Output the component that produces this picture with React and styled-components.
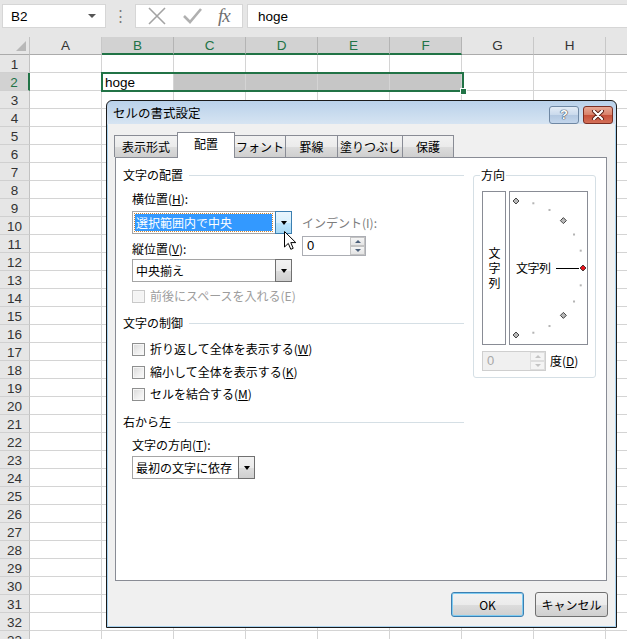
import React from 'react';
import styled, { createGlobalStyle, css } from 'styled-components';

const GlobalStyle = createGlobalStyle`
  html, body { margin: 0; padding: 0; }
  body { background: #fff; font-family: "Liberation Sans", Arial, sans-serif; }
  * { box-sizing: border-box; }
`;

const COLUMNS = ['A', 'B', 'C', 'D', 'E', 'F', 'G', 'H', 'I'];
const SELECTED_COLS = ['B', 'C', 'D', 'E', 'F'];
const ROW_COUNT = 33;
const GREEN = '#217346';
const JP = '"Noto Sans CJK JP", "Noto Sans", sans-serif';

const TABS = [
   { label: '表示形式', w: 64 },
   { label: '配置', w: 58, active: true },
   { label: 'フォント', w: 52 },
   { label: '罫線', w: 53 },
   { label: '塗りつぶし', w: 66 },
   { label: '保護', w: 52 },
];

// angles on the orientation dial, diamonds every 45 degrees
const DIAL_ANGLES = [90, 75, 60, 45, 30, 15, 0, -15, -30, -45, -60, -75, -90];

const Diamond = ({ x, y, fill }) => (
   <polygon points={`${x},${y - 3} ${x + 3},${y} ${x},${y + 3} ${x - 3},${y}`} fill={fill} stroke="#222" strokeWidth="0.8" />
);

const App = () => {
   const rows = Array.from({ length: ROW_COUNT }, (_, i) => i + 1);

   return (
      <>
         <GlobalStyle />
         <Screen>
            <FormulaBar>
               <NameBox>
                  B2
                  <NameCaret />
               </NameBox>
               <BarDots>⋮</BarDots>
               <FxBox>
                  <svg width="18" height="18" viewBox="0 0 18 18">
                     <path d="M1 1 L17 17 M17 1 L1 17" stroke="#a3a3a3" strokeWidth="1.6" fill="none" />
                  </svg>
                  <svg width="19" height="16" viewBox="0 0 19 16">
                     <path d="M1 8 L7 14 L18 1" stroke="#b0b0b0" strokeWidth="2.6" fill="none" />
                  </svg>
                  <FxLabel>fx</FxLabel>
               </FxBox>
               <FormulaInput>hoge</FormulaInput>
            </FormulaBar>

            <Sheet>
               <Corner><CornerMark /></Corner>
               {COLUMNS.map((c) => (
                  <ColHead key={c} $active={SELECTED_COLS.includes(c)}>{c === 'I' ? '' : c}</ColHead>
               ))}
               {rows.map((r) => (
                  <React.Fragment key={r}>
                     <RowHead $active={r === 2}>{r}</RowHead>
                     {COLUMNS.map((c) => (
                        <Cell key={c} $shade={r === 2 && c !== 'B' && SELECTED_COLS.includes(c)}>
                           {r === 2 && c === 'B' ? 'hoge' : ''}
                        </Cell>
                     ))}
                  </React.Fragment>
               ))}
               <SelectionFrame><FillHandle /></SelectionFrame>
            </Sheet>

            <Dialog>
               <TitleBar>
                  <TitleText>セルの書式設定</TitleText>
                  <TitleButtons>
                     <HelpButton>?</HelpButton>
                     <CloseButton>
                        <svg width="14" height="10" viewBox="0 0 14 10">
                           <path d="M3 1 L11 9 M11 1 L3 9" stroke="#5a1d14" strokeWidth="4" strokeLinecap="round" />
                           <path d="M3 1 L11 9 M11 1 L3 9" stroke="#fff" strokeWidth="2.2" strokeLinecap="round" />
                        </svg>
                     </CloseButton>
                  </TitleButtons>
               </TitleBar>

               <DialogBody>
                  <TabStrip>
                     {TABS.map((t) => (
                        <Tab key={t.label} $active={t.active} $w={t.w}>{t.label}</Tab>
                     ))}
                  </TabStrip>

                  <Panel>
                     <LeftColumn>
                        <GroupHeading $mt={9}>文字の配置</GroupHeading>
                        <FieldRow>
                           <FieldStack>
                              <FieldLabel>横位置(<u>H</u>):</FieldLabel>
                              <Select $mt={4}>
                                 <SelectValue $highlight>選択範囲内で中央</SelectValue>
                                 <SelectArrow $hot><ArrowGlyph /></SelectArrow>
                              </Select>
                              <FieldLabel $mt={7}>縦位置(<u>V</u>):</FieldLabel>
                              <Select $mt={2}>
                                 <SelectValue>中央揃え</SelectValue>
                                 <SelectArrow><ArrowGlyph /></SelectArrow>
                              </Select>
                           </FieldStack>
                           <IndentStack>
                              <FieldLabel $muted>インデント(I):</FieldLabel>
                              <Spinner $mt={5}>
                                 <SpinValue>0</SpinValue>
                                 <SpinButtons>
                                    <SpinButton><SpinGlyph $up /></SpinButton>
                                    <SpinButton><SpinGlyph /></SpinButton>
                                 </SpinButtons>
                              </Spinner>
                           </IndentStack>
                        </FieldRow>
                        <CheckRow $mt={6} $disabled>
                           <CheckBox $disabled />
                           <span>前後にスペースを入れる(E)</span>
                        </CheckRow>

                        <GroupHeading $mt={11}>文字の制御</GroupHeading>
                        <CheckRow $mt={10}>
                           <CheckBox />
                           <span>折り返して全体を表示する(<u>W</u>)</span>
                        </CheckRow>
                        <CheckRow $mt={7}>
                           <CheckBox />
                           <span>縮小して全体を表示する(<u>K</u>)</span>
                        </CheckRow>
                        <CheckRow $mt={6}>
                           <CheckBox />
                           <span>セルを結合する(<u>M</u>)</span>
                        </CheckRow>

                        <GroupHeading $mt={12}>右から左</GroupHeading>
                        <FieldLabel $mt={7} $indent>文字の方向(<u>T</u>):</FieldLabel>
                        <Select $mt={3} $w={123} $indent>
                           <SelectValue>最初の文字に依存</SelectValue>
                           <SelectArrow><ArrowGlyph /></SelectArrow>
                        </Select>
                     </LeftColumn>

                     <DirectionGroup>
                        <DirectionLegend>方向</DirectionLegend>
                        <DirectionRow>
                           <VerticalBox><VerticalText>文字列</VerticalText></VerticalBox>
                           <DialBox>
                              <DialDrawing width="77" height="152" viewBox="0 0 77 152">
                                 {DIAL_ANGLES.map((a) => {
                                    const rad = (a * Math.PI) / 180;
                                    const x = 6 + 67 * Math.cos(rad);
                                    const y = 76 - 67 * Math.sin(rad);
                                    if (a === 0) return <Diamond key={a} x={x} y={y} fill="#e8141c" />;
                                    if (a % 45 === 0) return <Diamond key={a} x={x} y={y} fill="#b8b8b8" />;
                                    return <rect key={a} x={x - 1} y={y - 1} width="2" height="2" fill="#b4b4b4" />;
                                 })}
                                 <line x1="46" y1="76.5" x2="69" y2="76.5" stroke="#000" strokeWidth="1" />
                              </DialDrawing>
                              <DialLabel>文字列</DialLabel>
                           </DialBox>
                        </DirectionRow>
                        <DegreeRow>
                           <Spinner $disabled>
                              <SpinValue $disabled>0</SpinValue>
                              <SpinButtons>
                                 <SpinButton $disabled><SpinGlyph $up $disabled /></SpinButton>
                                 <SpinButton $disabled><SpinGlyph $disabled /></SpinButton>
                              </SpinButtons>
                           </Spinner>
                           <DegreeLabel>度(<u>D</u>)</DegreeLabel>
                        </DegreeRow>
                     </DirectionGroup>

                     <Cursor width="13" height="20" viewBox="0 0 13 20">
                        <path d="M0.5 0.5 L0.5 16 L4.3 12.4 L6.8 18.3 L9.2 17.3 L6.8 11.6 L11.8 11.6 Z" fill="#fff" stroke="#000" strokeWidth="1" />
                     </Cursor>
                  </Panel>

                  <DialogFooter>
                     <DialogButton $default>OK</DialogButton>
                     <DialogButton>キャンセル</DialogButton>
                  </DialogFooter>
               </DialogBody>
            </Dialog>
         </Screen>
      </>
   );
};

/* ---------- sheet ---------- */

const Screen = styled.div`
   position: relative;
   width: 627px;
   height: 639px;
   overflow: hidden;
   background: #e6e6e6;
`;

const FormulaBar = styled.div`
   display: flex;
   align-items: flex-start;
   height: 37px;
   padding: 4px 0 0 2px;
   font-size: 13.5px;
   color: #000;
`;

const NameBox = styled.div`
   display: flex;
   align-items: center;
   justify-content: space-between;
   width: 104px;
   height: 24px;
   padding: 0 9px 0 8px;
   background: #fff;
   border: 1px solid #d6d6d6;
`;

const NameCaret = styled.span`
   width: 0;
   height: 0;
   border-left: 4px solid transparent;
   border-right: 4px solid transparent;
   border-top: 4px solid #555;
`;

const BarDots = styled.div`
   width: 29px;
   height: 24px;
   display: flex;
   align-items: center;
   justify-content: center;
   color: #7a7a7a;
   font-size: 15px;
`;

const FxBox = styled.div`
   display: flex;
   align-items: center;
   justify-content: space-around;
   width: 108px;
   height: 24px;
   padding: 0 4px;
   background: #fff;
   border: 1px solid #d6d6d6;
`;

const FxLabel = styled.span`
   font-family: "Liberation Serif", "Times New Roman", serif;
   font-style: italic;
   font-size: 19px;
   color: #707070;
   letter-spacing: -1px;
`;

const FormulaInput = styled.div`
   flex: 1;
   display: flex;
   align-items: center;
   height: 24px;
   margin-left: 4px;
   padding-left: 10px;
   background: #fff;
   border: 1px solid #d6d6d6;
   border-right: none;
`;

const Sheet = styled.div`
   position: relative;
   display: grid;
   grid-template-columns: 30px repeat(9, 72px);
   grid-auto-rows: 18px;
   background: #fff;
   font-size: 13.5px;
`;

const Corner = styled.div`
   display: flex;
   align-items: flex-end;
   justify-content: flex-end;
   padding: 0 3px 3px 0;
   background: #e6e6e6;
   border-right: 1px solid #c2c2c2;
   border-bottom: 1px solid #ababab;
`;

const CornerMark = styled.span`
   width: 0;
   height: 0;
   border-left: 10px solid transparent;
   border-bottom: 10px solid #b8b8b8;
`;

const ColHead = styled.div`
   display: flex;
   align-items: center;
   justify-content: center;
   background: #e6e6e6;
   color: #333;
   border-right: 1px solid #c8c8c8;
   border-bottom: 1px solid #ababab;
   ${(p) => p.$active && css`
      background: #d2d2d2;
      color: ${GREEN};
      border-right-color: #b4b4b4;
      border-bottom: 2px solid ${GREEN};
   `}
`;

const RowHead = styled.div`
   display: flex;
   align-items: center;
   justify-content: center;
   padding-top: 1px;
   background: #e6e6e6;
   color: #333;
   border-right: 1px solid #c2c2c2;
   border-bottom: 1px solid #d0d0d0;
   ${(p) => p.$active && css`
      background: #d2d2d2;
      color: ${GREEN};
      border-right: 2px solid ${GREEN};
   `}
`;

const Cell = styled.div`
   display: flex;
   align-items: flex-end;
   padding: 0 0 0 3px;
   line-height: 14px;
   background: ${(p) => (p.$shade ? '#c6c6c6' : '#fff')};
   border-right: 1px solid #d4d4d4;
   border-bottom: 1px solid #d4d4d4;
`;

const SelectionFrame = styled.div`
   position: absolute;
   left: 101px;
   top: 35px;
   width: 363px;
   height: 20px;
   border: 2px solid ${GREEN};
   pointer-events: none;
`;

const FillHandle = styled.span`
   position: absolute;
   right: -5px;
   bottom: -5px;
   width: 7px;
   height: 7px;
   background: ${GREEN};
   border: 1px solid #fff;
`;

/* ---------- dialog ---------- */

const Dialog = styled.div`
   position: absolute;
   left: 106px;
   top: 100px;
   width: 511px;
   display: flex;
   flex-direction: column;
   padding: 0 1px 1px 1px;
   border: 1px solid #1a1a1a;
   border-radius: 6px 6px 0 0;
   background: linear-gradient(180deg, #b9d1ea 0px, #d6e4f2 23px, #a9d2ee 24px, #a9d2ee 100%);
   font-family: ${JP};
   font-size: 12px;
   line-height: 16px;
   color: #000;
`;

const TitleBar = styled.div`
   display: flex;
   align-items: center;
   height: 23px;
   padding: 1px 2px 0 5px;
`;

const TitleText = styled.span`
   font-size: 12.5px;
`;

const TitleButtons = styled.div`
   display: flex;
   gap: 4px;
   margin-left: auto;
   margin-top: 3px;
`;

const titleButton = css`
   display: flex;
   align-items: center;
   justify-content: center;
   width: 30px;
   height: 18px;
   border-radius: 3px;
`;

const HelpButton = styled.div`
   ${titleButton}
   border: 1px solid #6f88a4;
   background: linear-gradient(180deg, #e3ecf6 0%, #c9d9ec 50%, #b3c8e1 51%, #c3d6ec 100%);
   color: #fff;
   font-family: "Liberation Sans", sans-serif;
   font-weight: bold;
   font-size: 13px;
   text-shadow: 0 0 1px #31445a, 0 0 1px #31445a, 0 0 1px #31445a;
`;

const CloseButton = styled.div`
   ${titleButton}
   border: 1px solid #7b2e22;
   background: linear-gradient(180deg, #e8a895 0%, #d88069 50%, #c7503a 51%, #d37058 100%);
`;

const DialogBody = styled.div`
   display: flex;
   flex-direction: column;
   padding: 8px 8px 9px 7px;
   background: #f0f0f0;
`;

const TabStrip = styled.div`
   position: relative;
   z-index: 1;
   display: flex;
   align-items: flex-end;
   height: 26px;
   margin: 0 0 -1px -1px;
`;

const Tab = styled.div`
   display: flex;
   align-items: center;
   justify-content: center;
   width: ${(p) => p.$w}px;
   height: 22px;
   margin-bottom: 1px;
   border: 1px solid #898c95;
   border-bottom: none;
   background: linear-gradient(180deg, #f2f2f2 0%, #ebebeb 50%, #dddddd 51%, #cfcfcf 100%);
   & + & { margin-left: -1px; }
   ${(p) => p.$active && css`
      height: 26px;
      margin-bottom: 0;
      background: #fff;
      padding-bottom: 3px;
   `}
`;

const Panel = styled.div`
   position: relative;
   display: flex;
   height: 424px;
   border: 1px solid #898c95;
   background: #fff;
`;

const LeftColumn = styled.div`
   display: flex;
   flex-direction: column;
   width: 348px;
   padding-left: 7px;
`;

const GroupHeading = styled.div`
   display: flex;
   align-items: center;
   gap: 6px;
   height: 16px;
   margin-top: ${(p) => p.$mt}px;
   &::after {
      content: '';
      flex: 1;
      border-top: 1px solid #d5dfe5;
   }
`;

const FieldRow = styled.div`
   display: flex;
   margin: 8px 0 0 9px;
`;

const FieldStack = styled.div`
   display: flex;
   flex-direction: column;
   width: 160px;
`;

const IndentStack = styled.div`
   display: flex;
   flex-direction: column;
   margin-left: 10px;
   padding-top: 24px;
`;

const FieldLabel = styled.div`
   height: 16px;
   margin-top: ${(p) => p.$mt || 0}px;
   margin-left: ${(p) => (p.$indent ? 9 : 0)}px;
   color: ${(p) => (p.$muted ? '#7d7d7d' : '#000')};
   white-space: nowrap;
`;

const Select = styled.div`
   display: flex;
   width: ${(p) => p.$w || 160}px;
   height: 23px;
   margin-top: ${(p) => p.$mt || 0}px;
   margin-left: ${(p) => (p.$indent ? 9 : 0)}px;
   border: 1px solid #a5a5a5;
   background: #fff;
`;

const SelectValue = styled.div`
   flex: 1;
   display: flex;
   align-items: center;
   padding-left: 3px;
   ${(p) => p.$highlight && css`
      margin: 2px 3px 2px 2px;
      padding-left: 1px;
      background: #3399ff;
      color: #fff;
      outline: 1px dotted #c9853a;
   `}
`;

const SelectArrow = styled.div`
   display: flex;
   align-items: center;
   justify-content: center;
   width: 17px;
   margin: -1px -1px -1px 0;
   border: 1px solid #707070;
   background: linear-gradient(180deg, #f2f2f2 0%, #ebebeb 50%, #dddddd 51%, #cfcfcf 100%);
   ${(p) => p.$hot && css`
      border-color: #3c7fb1;
      background: linear-gradient(180deg, #eaf6fd 0%, #d9f0fc 50%, #bee6fd 51%, #a7d9f5 100%);
   `}
`;

const ArrowGlyph = styled.span`
   width: 0;
   height: 0;
   border-left: 3.5px solid transparent;
   border-right: 3.5px solid transparent;
   border-top: 4px solid #000;
`;

const Spinner = styled.div`
   display: flex;
   width: 64px;
   height: 20px;
   margin-top: ${(p) => p.$mt || 0}px;
   border: 1px solid ${(p) => (p.$disabled ? '#cfcfcf' : '#abadb3')};
   background: ${(p) => (p.$disabled ? '#f0f0f0' : '#fff')};
`;

const SpinValue = styled.div`
   flex: 1;
   display: flex;
   align-items: center;
   padding-left: 4px;
   font-family: "Liberation Sans", sans-serif;
   font-size: 13px;
   color: ${(p) => (p.$disabled ? '#a8a8a8' : '#000')};
`;

const SpinButtons = styled.div`
   display: flex;
   flex-direction: column;
   width: 15px;
`;

const SpinButton = styled.div`
   flex: 1;
   display: flex;
   align-items: center;
   justify-content: center;
   border: 1px solid ${(p) => (p.$disabled ? '#dedede' : '#c4c4c4')};
   background: ${(p) => (p.$disabled ? '#f4f4f4' : 'linear-gradient(180deg, #f6f6f6, #e4e4e4)')};
`;

const SpinGlyph = styled.span`
   width: 0;
   height: 0;
   border-left: 3px solid transparent;
   border-right: 3px solid transparent;
   ${(p) => (p.$up
      ? css`border-bottom: 3px solid ${p.$disabled ? '#c4c4c4' : '#4c607a'};`
      : css`border-top: 3px solid ${p.$disabled ? '#c4c4c4' : '#4c607a'};`)}
`;

const CheckRow = styled.div`
   display: flex;
   align-items: center;
   gap: 5px;
   height: 16px;
   margin: ${(p) => p.$mt}px 0 0 9px;
   color: ${(p) => (p.$disabled ? '#9d9d9d' : '#000')};
   white-space: nowrap;
`;

const CheckBox = styled.span`
   width: 13px;
   height: 13px;
   border: 1px solid ${(p) => (p.$disabled ? '#c9c9c9' : '#8e8f8f')};
   background: ${(p) => (p.$disabled
      ? '#f4f4f4'
      : 'linear-gradient(135deg, #d8d8d8 0%, #f0f0f0 60%, #fafafa 100%)')};
   box-shadow: inset 0 0 0 1px #f6f6f6;
`;

const DirectionGroup = styled.fieldset`
   width: 123px;
   height: 211px;
   margin: 9px 0 0 9px;
   padding: 0 0 6px 8px;
   border: 1px solid #d5dfe5;
   border-radius: 3px;
   min-width: 0;
`;

const DirectionLegend = styled.legend`
   margin-left: -2px;
   padding: 0 1px;
   height: 16px;
   line-height: 16px;
`;

const DirectionRow = styled.div`
   display: flex;
   gap: 3px;
   margin-top: 8px;
`;

const VerticalBox = styled.div`
   display: flex;
   align-items: center;
   justify-content: center;
   width: 24px;
   height: 154px;
   border: 1px solid #898c95;
`;

const VerticalText = styled.span`
   writing-mode: vertical-rl;
   text-orientation: upright;
   letter-spacing: 3px;
   line-height: 12px;
   margin-top: 2px;
`;

const DialBox = styled.div`
   position: relative;
   display: flex;
   align-items: center;
   width: 79px;
   height: 154px;
   padding-left: 6px;
   border: 1px solid #898c95;
`;

const DialDrawing = styled.svg`
   position: absolute;
   left: 0;
   top: 0;
`;

const DialLabel = styled.span`
   position: relative;
   letter-spacing: -0.5px;
`;

const DegreeRow = styled.div`
   display: flex;
   align-items: center;
   gap: 4px;
   margin-top: 6px;
`;

const DegreeLabel = styled.span`
   font-size: 12px;
`;

const Cursor = styled.svg`
   position: absolute;
   left: 168px;
   top: 73px;
`;

const DialogFooter = styled.div`
   display: flex;
   justify-content: flex-end;
   gap: 11px;
   margin: 11px -1px 0 0;
`;

const DialogButton = styled.div`
   display: flex;
   align-items: center;
   justify-content: center;
   width: 73px;
   height: 25px;
   border: 1px solid #707070;
   border-radius: 3px;
   background: linear-gradient(180deg, #f2f2f2 0%, #ebebeb 50%, #dddddd 51%, #cfcfcf 100%);
   ${(p) => p.$default && css`
      border-color: #3c7fb1;
      box-shadow: inset 0 0 0 1px #7ecbf1;
   `}
`;

export default App;
